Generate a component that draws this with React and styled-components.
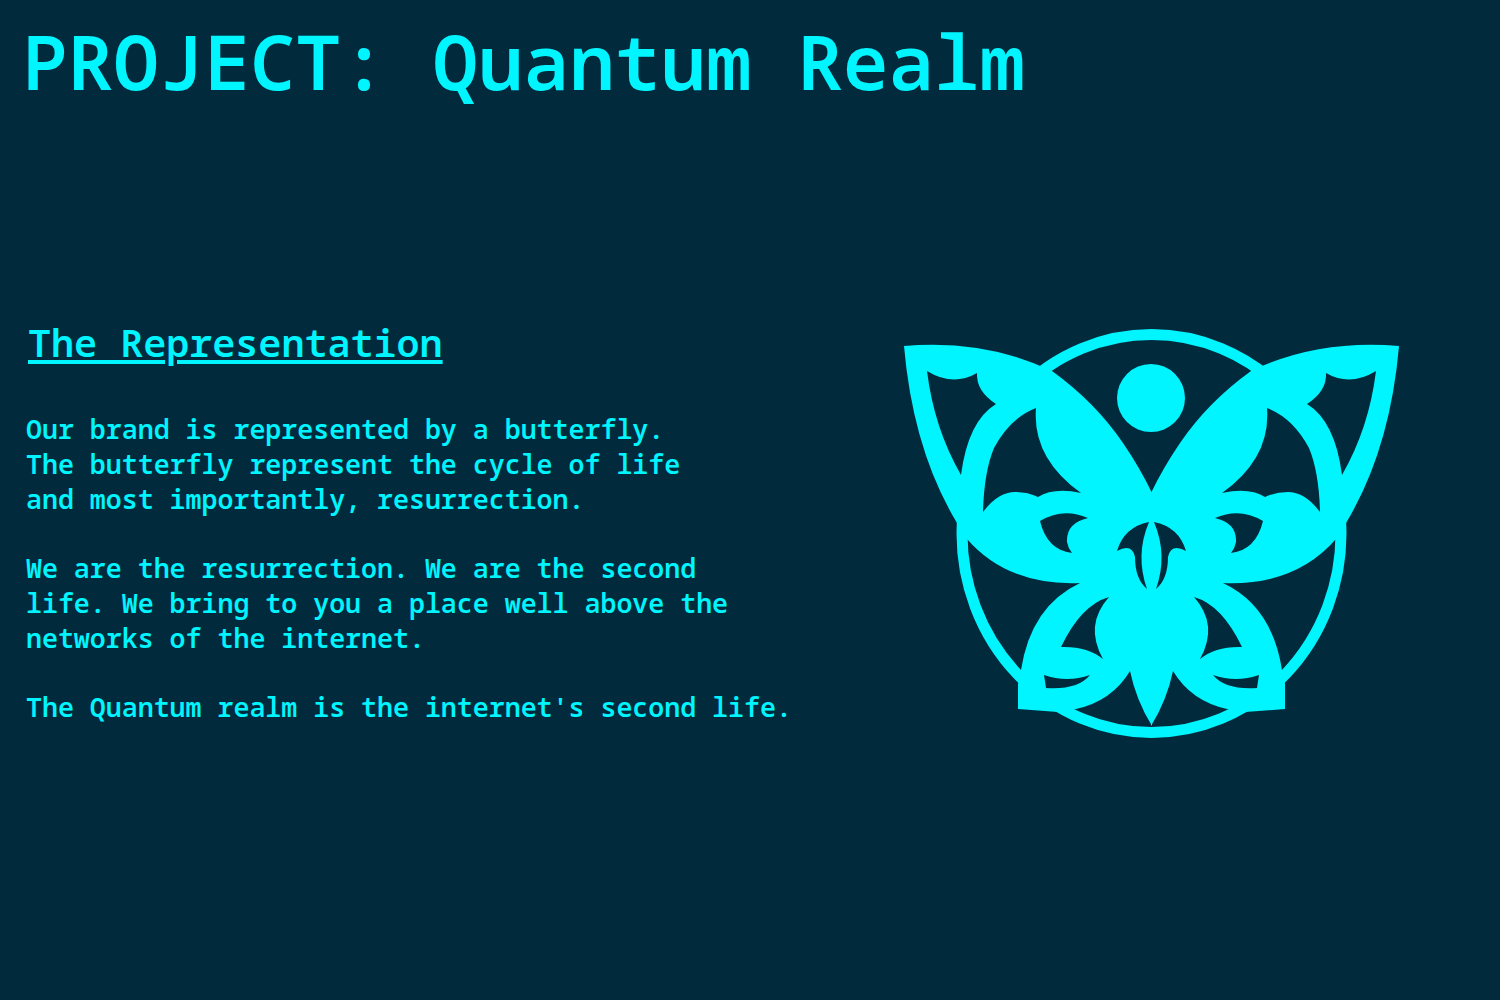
import React from 'react';
import styled, { createGlobalStyle } from 'styled-components';

const BG = '#012b3d';
const CYAN = '#00f5ff';

const GlobalStyle = createGlobalStyle`
  html, body {
    margin: 0;
    padding: 0;
    background: ${BG};
  }
`;

const Page = styled.main`
  width: 1500px;
  height: 1000px;
  overflow: hidden;
  background: ${BG};
  color: ${CYAN};
  font-family: "Noto Sans Mono", "DejaVu Sans Mono", "Liberation Mono", monospace;
`;

const Title = styled.h1`
  margin: 0;
  padding: 13px 0 0 22px;
  font-size: 76px;
  line-height: 96px;
  font-weight: 650;
  white-space: nowrap;
`;

const Content = styled.section`
  display: flex;
  align-items: flex-start;
  padding: 209px 0 0 26px;
`;

const TextColumn = styled.div`
  width: 874px;
  flex: none;
`;

const Heading = styled.h2`
  margin: 0 0 46px 2px;
  font-size: 38.4px;
  line-height: 48px;
  font-weight: 600;
  text-decoration: underline;
  text-decoration-thickness: 4px;
  text-underline-offset: 3px;
  white-space: nowrap;
`;

const Paragraph = styled.p`
  margin: 0 0 34.8px;
  font-size: 26.6px;
  line-height: 34.8px;
  font-weight: 600;
  white-space: nowrap;
`;

const Logo = styled.svg`
  flex: none;
  width: 503px;
  height: 417px;
  margin-top: 7px;
`;

const holes = [
  // outer forewing gap
  'M927 371 Q953 387 977 373 Q976 391 996 404 Q968 421 961 475 Q934 428 927 371Z',
  // inner forewing gap
  'M1036 408 Q1010 418 994 448 Q984 472 983 512 Q998 492 1015 492 Q1028 492 1038 497 Q1054 487 1081 493 Q1032 458 1036 408Z',
  // eye
  'M1040 521 Q1063 507 1088 518 Q1066 523 1067 542 Q1068 548 1072 553 Q1047 550 1040 521Z',
  // centre
  'M1149 522 Q1124 527 1117 551 Q1132 543 1135 557 Q1135 579 1147 589 Q1135 555 1149 522Z',
  // hindwing gap
  'M1109 597 Q1081 605 1061 647 Q1087 646 1103 659 Q1084 625 1109 597Z',
  // lower hindwing slit
  'M1044 675 Q1067 683 1090 675 Q1078 690 1046 688Z',
];

const Wing = ({ flip }) => (
  <g transform={flip ? 'translate(2303 0) scale(-1 1)' : undefined}>
    <path
      fill={CYAN}
      d="M904 346 Q985 339 1052 371 Q1095 402 1123 443 Q1140 468 1152 493 L1152 726 Q1136 700 1130 671 Q1112 701 1076 709 L1058 712 L1018 709 L1018 684 L1021 670 Q1031 606 1080 583 Q1008 586 967 539 L957 523 Q913 450 904 346Z"
    />
    {holes.map(d => (
      <path key={d} fill={BG} d={d} />
    ))}
  </g>
);

const App = () => (
  <Page>
    <GlobalStyle />
    <Title>PROJECT: Quantum Realm</Title>
    <Content>
      <TextColumn>
        <Heading>The Representation</Heading>
        <Paragraph>
          Our brand is represented by a butterfly.<br />
          The butterfly represent the cycle of life<br />
          and most importantly, resurrection.
        </Paragraph>
        <Paragraph>
          We are the resurrection. We are the second<br />
          life. We bring to you a place well above the<br />
          networks of the internet.
        </Paragraph>
        <Paragraph>The Quantum realm is the internet's second life.</Paragraph>
      </TextColumn>
      <Logo viewBox="900 325 503 417">
        <ellipse cx="1151.5" cy="533.5" rx="189.5" ry="199" fill="none" stroke={CYAN} strokeWidth="11" />
        <circle cx="1151" cy="398" r="34" fill={CYAN} />
        <Wing />
        <Wing flip />
      </Logo>
    </Content>
  </Page>
);

export default App;
